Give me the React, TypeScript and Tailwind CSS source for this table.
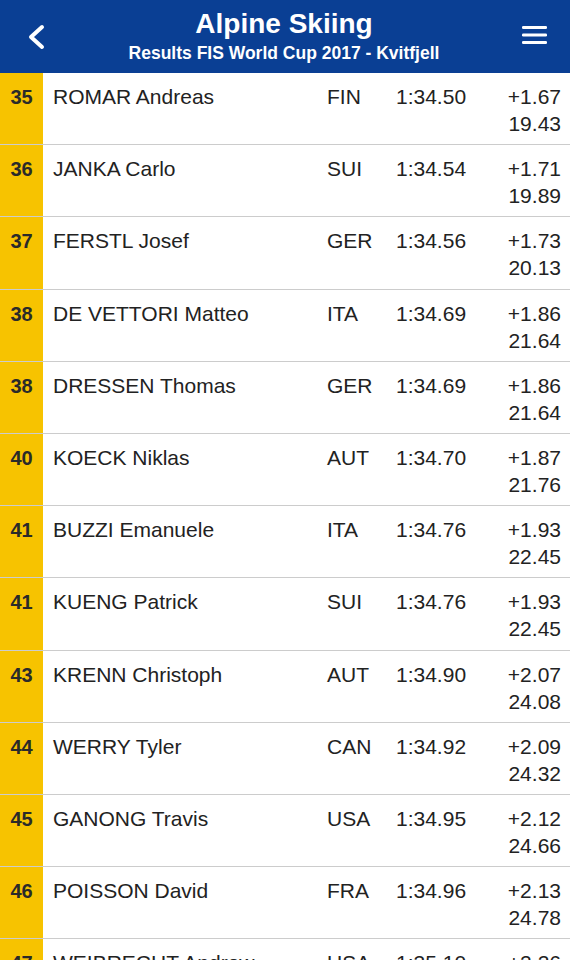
import React from 'react'

interface IResult {
  rank: number
  name: string
  nation: string
  time: string
  diff: string
  points: string
}

const results: IResult[] = [
  { rank: 35, name: 'ROMAR Andreas', nation: 'FIN', time: '1:34.50', diff: '+1.67', points: '19.43' },
  { rank: 36, name: 'JANKA Carlo', nation: 'SUI', time: '1:34.54', diff: '+1.71', points: '19.89' },
  { rank: 37, name: 'FERSTL Josef', nation: 'GER', time: '1:34.56', diff: '+1.73', points: '20.13' },
  { rank: 38, name: 'DE VETTORI Matteo', nation: 'ITA', time: '1:34.69', diff: '+1.86', points: '21.64' },
  { rank: 38, name: 'DRESSEN Thomas', nation: 'GER', time: '1:34.69', diff: '+1.86', points: '21.64' },
  { rank: 40, name: 'KOECK Niklas', nation: 'AUT', time: '1:34.70', diff: '+1.87', points: '21.76' },
  { rank: 41, name: 'BUZZI Emanuele', nation: 'ITA', time: '1:34.76', diff: '+1.93', points: '22.45' },
  { rank: 41, name: 'KUENG Patrick', nation: 'SUI', time: '1:34.76', diff: '+1.93', points: '22.45' },
  { rank: 43, name: 'KRENN Christoph', nation: 'AUT', time: '1:34.90', diff: '+2.07', points: '24.08' },
  { rank: 44, name: 'WERRY Tyler', nation: 'CAN', time: '1:34.92', diff: '+2.09', points: '24.32' },
  { rank: 45, name: 'GANONG Travis', nation: 'USA', time: '1:34.95', diff: '+2.12', points: '24.66' },
  { rank: 46, name: 'POISSON David', nation: 'FRA', time: '1:34.96', diff: '+2.13', points: '24.78' },
  { rank: 47, name: 'WEIBRECHT Andrew', nation: 'USA', time: '1:35.10', diff: '+2.26', points: '26.32' },
]

const Header: React.FC = () => (
  <header className="flex h-[73px] items-center justify-between bg-[#0a3f94] pl-[28px] pr-[23px] text-white">
    <svg width="18" height="26" viewBox="0 0 18 26" className="shrink-0">
      <path d="M14 3 L3 13 L14 23" fill="none" stroke="#fff" strokeWidth="4" strokeLinecap="round" strokeLinejoin="round" />
    </svg>
    <div className="flex flex-col items-center self-start pt-[9px]">
      <h1 className="text-[28px] font-bold leading-[30px]">Alpine Skiing</h1>
      <p className="mt-[3px] text-[17.5px] font-bold leading-[22px]">Results FIS World Cup 2017 - Kvitfjell</p>
    </div>
    <svg width="25" height="19" viewBox="0 0 25 19" className="shrink-0 -mt-[2px]">
      <rect x="0" y="0" width="25" height="3" rx="1.3" fill="#fff" />
      <rect x="0" y="7.5" width="25" height="3" rx="1.3" fill="#fff" />
      <rect x="0" y="15" width="25" height="3" rx="1.3" fill="#fff" />
    </svg>
  </header>
)

const Row: React.FC<{ r: IResult }> = ( { r } ) => (
  <li className="flex h-[72.2px] border-b border-[#cccccc]">
    <div className="flex w-[43px] shrink-0 justify-center bg-[#f7c300] pt-[11px] text-[20px] font-bold leading-[27px] text-[#2a2a2a]">
      {r.rank}
    </div>
    <div className="flex flex-1 pt-[10px] pr-[9px] text-[21px] leading-[27px] text-[#222]">
      <span className="w-[284px] pl-[10px]">{r.name}</span>
      <span className="w-[69px]">{r.nation}</span>
      <span className="flex-1">{r.time}</span>
      <span className="flex flex-col items-end">
        <span>{r.diff}</span>
        <span>{r.points}</span>
      </span>
    </div>
  </li>
)

export default function App() {
  return (
    <div className="h-[960px] w-[570px] overflow-hidden bg-white font-['Liberation_Sans',Arial,sans-serif]">
      <Header />
      <ol role="list">
        {results.map( ( r, idx ) => (
          <Row key={idx} r={r} />
        ) )}
      </ol>
    </div>
  )
}
